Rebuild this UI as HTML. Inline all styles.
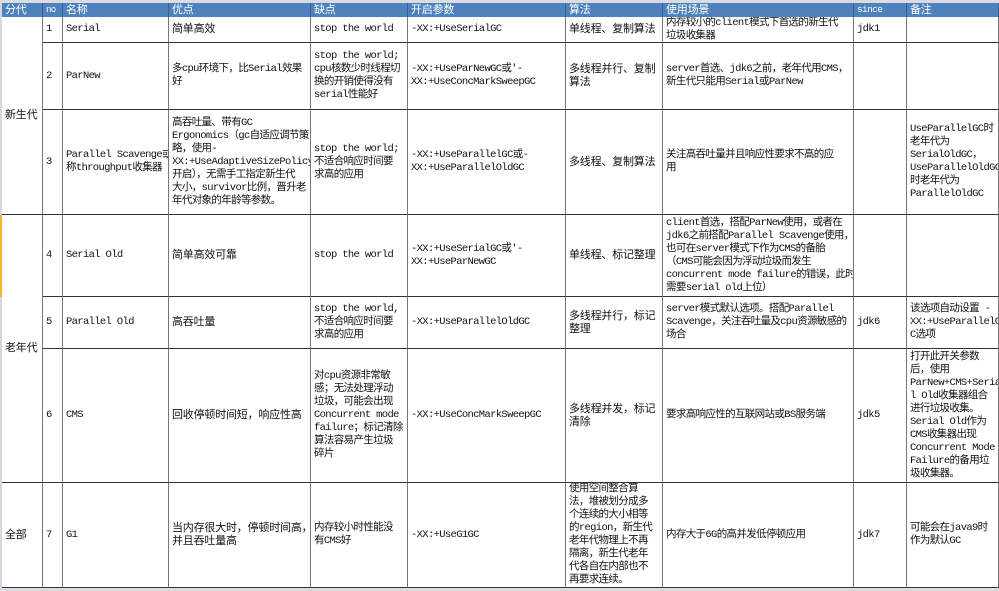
<!DOCTYPE html>
<html><head><meta charset="utf-8"><style>
*{margin:0;padding:0;box-sizing:border-box}
body{width:999px;height:591px;background:#fff;position:relative;overflow:hidden;font-family:"Liberation Mono","Noto Sans CJK SC",monospace;font-size:10.5px;letter-spacing:-0.65px;line-height:13px;color:#111}
.c{position:absolute;display:flex;align-items:center;padding-left:3px;white-space:nowrap;overflow:hidden;border-right:1px solid #777;border-bottom:1px solid #333}
.h{position:absolute;top:3px;height:14px;background:#4f81bd;color:#fff;font-size:11px;line-height:14px;padding-left:3px;border-right:1px solid #35608f;white-space:nowrap;overflow:hidden}
.z{font-family:"Liberation Sans","Noto Sans CJK SC",sans-serif;font-size:11px;letter-spacing:-0.2px}
</style></head><body>
<div style="position:absolute;left:0;top:0;width:999px;height:3px;background:#d9dde3"></div>
<div style="position:absolute;left:0;top:3px;width:2px;height:588px;background:#d4d8de"></div>
<div style="position:absolute;left:0;top:215px;width:2px;height:82px;background:#f0b43c"></div>
<div style="position:absolute;left:0;top:588px;width:999px;height:3px;background:#d9dde3"></div>

<div class="h z" style="left:2px;width:41px">分代</div>
<div class="h" style="left:43px;width:20px;font-size:9px">no</div>
<div class="h z" style="left:63px;width:106px">名称</div>
<div class="h z" style="left:169px;width:142px">优点</div>
<div class="h z" style="left:311px;width:97px">缺点</div>
<div class="h z" style="left:408px;width:158px">开启参数</div>
<div class="h z" style="left:566px;width:97px">算法</div>
<div class="h z" style="left:663px;width:191px">使用场景</div>
<div class="h" style="left:854px;width:53px;font-size:9.5px">since</div>
<div class="h z" style="left:907px;width:92px">备注</div>

<div class="c z" style="left:2px;top:17px;width:41px;height:198px">新生代</div>
<div class="c z" style="left:2px;top:215px;width:41px;height:268px">老年代</div>
<div class="c z" style="left:2px;top:483px;width:41px;height:105px">全部</div>

<div class="c" style="left:43px;top:17px;width:20px;height:26px">1</div>
<div class="c" style="left:63px;top:17px;width:106px;height:26px">Serial</div>
<div class="c z" style="left:169px;top:17px;width:142px;height:26px">简单高效</div>
<div class="c" style="left:311px;top:17px;width:97px;height:26px">stop the world</div>
<div class="c" style="left:408px;top:17px;width:158px;height:26px">-XX:+UseSerialGC</div>
<div class="c z" style="left:566px;top:17px;width:97px;height:26px">单线程、复制算法</div>
<div class="c" style="left:663px;top:17px;width:191px;height:26px">内存较小的client模式下首选的新生代<br>垃圾收集器</div>
<div class="c" style="left:854px;top:17px;width:53px;height:26px">jdk1</div>
<div class="c" style="left:907px;top:17px;width:92px;height:26px"></div>

<div class="c" style="left:43px;top:43px;width:20px;height:67px">2</div>
<div class="c" style="left:63px;top:43px;width:106px;height:67px">ParNew</div>
<div class="c" style="left:169px;top:43px;width:142px;height:67px">多cpu环境下，比Serial效果<br>好</div>
<div class="c" style="left:311px;top:43px;width:97px;height:67px">stop the world;<br>cpu核数少时线程切<br>换的开销使得没有<br>serial性能好</div>
<div class="c" style="left:408px;top:43px;width:158px;height:67px">-XX:+UseParNewGC或'-<br>XX:+UseConcMarkSweepGC</div>
<div class="c z" style="left:566px;top:43px;width:97px;height:67px">多线程并行、复制<br>算法</div>
<div class="c" style="left:663px;top:43px;width:191px;height:67px">server首选、jdk6之前，老年代用CMS，<br>新生代只能用Serial或ParNew</div>
<div class="c" style="left:854px;top:43px;width:53px;height:67px"></div>
<div class="c" style="left:907px;top:43px;width:92px;height:67px"></div>

<div class="c" style="left:43px;top:110px;width:20px;height:105px">3</div>
<div class="c" style="left:63px;top:110px;width:106px;height:105px">Parallel Scavenge或<br>称throughput收集器</div>
<div class="c" style="left:169px;top:110px;width:142px;height:105px">高吞吐量、带有GC<br>Ergonomics（gc自适应调节策<br>略，使用-<br>XX:+UseAdaptiveSizePolicy<br>开启），无需手工指定新生代<br>大小，survivor比例，晋升老<br>年代对象的年龄等参数。</div>
<div class="c" style="left:311px;top:110px;width:97px;height:105px">stop the world;<br>不适合响应时间要<br>求高的应用</div>
<div class="c" style="left:408px;top:110px;width:158px;height:105px">-XX:+UseParallelGC或-<br>XX:+UseParallelOldGC</div>
<div class="c z" style="left:566px;top:110px;width:97px;height:105px">多线程、复制算法</div>
<div class="c" style="left:663px;top:110px;width:191px;height:105px">关注高吞吐量并且响应性要求不高的应<br>用</div>
<div class="c" style="left:854px;top:110px;width:53px;height:105px"></div>
<div class="c" style="left:907px;top:110px;width:92px;height:105px">UseParallelGC时<br>老年代为<br>SerialOldGC，<br>UseParallelOldGC<br>时老年代为<br>ParallelOldGC</div>

<div class="c" style="left:43px;top:215px;width:20px;height:82px">4</div>
<div class="c" style="left:63px;top:215px;width:106px;height:82px">Serial Old</div>
<div class="c z" style="left:169px;top:215px;width:142px;height:82px">简单高效可靠</div>
<div class="c" style="left:311px;top:215px;width:97px;height:82px">stop the world</div>
<div class="c" style="left:408px;top:215px;width:158px;height:82px">-XX:+UseSerialGC或'-<br>XX:+UseParNewGC</div>
<div class="c z" style="left:566px;top:215px;width:97px;height:82px">单线程、标记整理</div>
<div class="c" style="left:663px;top:215px;width:191px;height:82px">client首选，搭配ParNew使用，或者在<br>jdk6之前搭配Parallel Scavenge使用，<br>也可在server模式下作为CMS的备胎<br>（CMS可能会因为浮动垃圾而发生<br>concurrent mode failure的错误，此时<br>需要serial old上位）</div>
<div class="c" style="left:854px;top:215px;width:53px;height:82px"></div>
<div class="c" style="left:907px;top:215px;width:92px;height:82px"></div>

<div class="c" style="left:43px;top:297px;width:20px;height:52px">5</div>
<div class="c" style="left:63px;top:297px;width:106px;height:52px">Parallel Old</div>
<div class="c z" style="left:169px;top:297px;width:142px;height:52px">高吞吐量</div>
<div class="c" style="left:311px;top:297px;width:97px;height:52px">stop the world,<br>不适合响应时间要<br>求高的应用</div>
<div class="c" style="left:408px;top:297px;width:158px;height:52px">-XX:+UseParallelOldGC</div>
<div class="c z" style="left:566px;top:297px;width:97px;height:52px">多线程并行，标记<br>整理</div>
<div class="c" style="left:663px;top:297px;width:191px;height:52px">server模式默认选项。搭配Parallel<br>Scavenge，关注吞吐量及cpu资源敏感的<br>场合</div>
<div class="c" style="left:854px;top:297px;width:53px;height:52px">jdk6</div>
<div class="c" style="left:907px;top:297px;width:92px;height:52px">该选项自动设置 -<br>XX:+UseParallelG<br>C选项</div>

<div class="c" style="left:43px;top:349px;width:20px;height:134px">6</div>
<div class="c" style="left:63px;top:349px;width:106px;height:134px">CMS</div>
<div class="c z" style="left:169px;top:349px;width:142px;height:134px">回收停顿时间短，响应性高</div>
<div class="c" style="left:311px;top:349px;width:97px;height:134px">对cpu资源非常敏<br>感；无法处理浮动<br>垃圾，可能会出现<br>Concurrent mode<br>failure；标记清除<br>算法容易产生垃圾<br>碎片</div>
<div class="c" style="left:408px;top:349px;width:158px;height:134px">-XX:+UseConcMarkSweepGC</div>
<div class="c z" style="left:566px;top:349px;width:97px;height:134px">多线程并发，标记<br>清除</div>
<div class="c" style="left:663px;top:349px;width:191px;height:134px">要求高响应性的互联网站或BS服务端</div>
<div class="c" style="left:854px;top:349px;width:53px;height:134px">jdk5</div>
<div class="c" style="left:907px;top:349px;width:92px;height:134px">打开此开关参数<br>后，使用<br>ParNew+CMS+Seria<br>l Old收集器组合<br>进行垃圾收集。<br>Serial Old作为<br>CMS收集器出现<br>Concurrent Mode<br>Failure的备用垃<br>圾收集器。</div>

<div class="c" style="left:43px;top:483px;width:20px;height:105px">7</div>
<div class="c" style="left:63px;top:483px;width:106px;height:105px">G1</div>
<div class="c z" style="left:169px;top:483px;width:142px;height:105px">当内存很大时，停顿时间高，<br>并且吞吐量高</div>
<div class="c" style="left:311px;top:483px;width:97px;height:105px">内存较小时性能没<br>有CMS好</div>
<div class="c" style="left:408px;top:483px;width:158px;height:105px">-XX:+UseG1GC</div>
<div class="c" style="left:566px;top:483px;width:97px;height:105px">使用空间整合算<br>法，堆被划分成多<br>个连续的大小相等<br>的region，新生代<br>老年代物理上不再<br>隔离，新生代老年<br>代各自在内部也不<br>再要求连续。</div>
<div class="c" style="left:663px;top:483px;width:191px;height:105px">内存大于6G的高并发低停顿应用</div>
<div class="c" style="left:854px;top:483px;width:53px;height:105px">jdk7</div>
<div class="c" style="left:907px;top:483px;width:92px;height:105px">可能会在java9时<br>作为默认GC</div>
</body></html>
